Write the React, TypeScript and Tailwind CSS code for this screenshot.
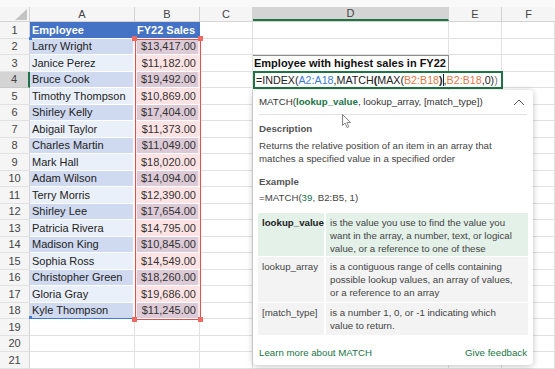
import React from 'react';

const people: [string, string][] = [
  ['Larry Wright', '$13,417.00'],
  ['Janice Perez', '$11,182.00'],
  ['Bruce Cook', '$19,492.00'],
  ['Timothy Thompson', '$10,869.00'],
  ['Shirley Kelly', '$17,404.00'],
  ['Abigail Taylor', '$11,373.00'],
  ['Charles Martin', '$11,049.00'],
  ['Mark Hall', '$18,020.00'],
  ['Adam Wilson', '$14,094.00'],
  ['Terry Morris', '$12,390.00'],
  ['Shirley Lee', '$17,654.00'],
  ['Patricia Rivera', '$14,795.00'],
  ['Madison King', '$10,845.00'],
  ['Sophia Ross', '$14,549.00'],
  ['Christopher Green', '$18,260.00'],
  ['Gloria Gray', '$19,686.00'],
  ['Kyle Thompson', '$11,245.00'],
];

const cols = [
  { key: 'A', w: 'w-[105px]' },
  { key: 'B', w: 'w-[65px]' },
  { key: 'C', w: 'w-[53px]' },
  { key: 'D', w: 'w-[196px]' },
  { key: 'E', w: 'w-[53px]' },
];

const Grid = 'border-r border-b border-[#e1e1e1]';

function Row({ n }: { n: number }) {
  const person = n >= 2 && n <= 18 ? people[n - 2] : null;
  const even = n % 2 === 0;
  const active = n === 4;
  return (
    <div className="flex h-[16.5px]">
      <div
        className={`w-[30px] shrink-0 flex items-center justify-center text-[11px] text-[#444] border-b ${
          active ? 'bg-[#d4d4d4] border-r-2 border-r-[#217346] border-b-[#c8c8c8]' : 'bg-[#f5f5f5] border-r border-r-[#d4d4d4] border-b-[#e1e1e1]'
        }`}
      >
        {n}
      </div>
      {/* column A */}
      {n === 1 ? (
        <div className="w-[105px] shrink-0 bg-[#4472c4] text-white font-bold text-[11px] flex items-center pl-[2px] border-b border-white">
          Employee
        </div>
      ) : person ? (
        <div
          className={`w-[105px] shrink-0 text-[11px] text-[#222] flex items-center pl-[2px] border-b border-r-2 border-white ${
            even ? 'bg-[#cfd9f0]' : 'bg-[#eaf0fa]'
          }`}
        >
          {person[0]}
        </div>
      ) : (
        <div className={`w-[105px] shrink-0 ${Grid}`} />
      )}
      {/* column B */}
      {n === 1 ? (
        <div className="w-[65px] shrink-0 bg-[#4472c4] text-white font-bold text-[11px] flex items-center pl-[2px] border-b border-white">
          FY22 Sales
        </div>
      ) : person ? (
        <div className="w-[65px] shrink-0 px-[2px] border-b border-white bg-[#fde6e6]">
          <div
            className={`h-full flex items-center justify-end pr-[2px] text-[11px] text-[#333] ${
              even ? 'bg-[#ddcad7]' : 'bg-[#fde3e3]'
            }`}
          >
            {person[1]}
          </div>
        </div>
      ) : (
        <div className={`w-[65px] shrink-0 ${Grid}`} />
      )}
      <div className={`w-[53px] shrink-0 ${Grid}`} />
      {n === 3 ? (
        <div className="w-[196px] shrink-0 border-t border-r border-[#8c8c8c] border-b border-b-[#e1e1e1] flex items-center pl-[1px] text-[11px] font-bold text-[#111] whitespace-nowrap">
          Employee with highest sales in FY22
        </div>
      ) : (
        <div className={`w-[196px] shrink-0 ${Grid}`} />
      )}
      <div className={`w-[53px] shrink-0 ${Grid}`} />
      <div className={`flex-1 ${Grid}`} />
    </div>
  );
}

function Formula() {
  const blue = 'text-[#3f7bd6]';
  const orange = 'text-[#e07a4c]';
  return (
    <div className="absolute left-[253px] top-[71px] w-[250px] h-[18px] bg-white border-2 border-[#217346] flex items-center pl-[1px] text-[10.7px] text-[#222] whitespace-nowrap">
      <span>=INDEX(</span>
      <span className={blue}>A2:A18</span>
      <span>,MATCH</span>
      <span className="font-bold">(</span>
      <span>MAX(</span>
      <span className={orange}>B2:B18</span>
      <span className="font-bold">)</span>
      <span className="inline-block w-px h-[12px] bg-[#222]" />
      <span>,</span>
      <span className={orange}>B2:B18</span>
      <span>,0)</span>
      <span className="text-[#777]">)</span>
    </div>
  );
}

function ArgRow({ name, lines, bold, bg, h }: { name: string; lines: string[]; bold?: boolean; bg: string; h: string }) {
  return (
    <div className={`flex gap-[2px] ${h}`}>
      <div className={`w-[66px] shrink-0 ${bg} pl-[4px] pt-[3px] leading-[13px] whitespace-nowrap ${bold ? 'font-bold text-[#222]' : 'text-[#444]'}`}>{name}</div>
      <div className={`flex-1 ${bg} pl-[4px] pt-[3px] leading-[13px] text-[#444] whitespace-nowrap`}>
        {lines.map(l => (
          <div key={l}>{l}</div>
        ))}
      </div>
    </div>
  );
}

function Tooltip() {
  return (
    <div className="absolute left-[253px] top-[90px] w-[280px] h-[275px] bg-white rounded-[4px] shadow-[0_1px_6px_rgba(0,0,0,0.25)] text-[9.7px] text-[#444]">
      <div className="h-[24px] flex items-center justify-between px-[6px]">
        <div className="text-[#333]">
          MATCH(<span className="font-bold text-[#217346]">lookup_value</span>, lookup_array, [match_type])
        </div>
        <svg width="12" height="8" viewBox="0 0 12 8" className="mr-[2px]">
          <polyline points="1,7 6,2 11,7" fill="none" stroke="#555" strokeWidth="1" />
        </svg>
      </div>
      <div className="mx-[6px] border-b border-[#e1e1e1]" />
      <div className="px-[6px] pt-[7px] leading-[13px]">
        <div className="font-bold text-[#555]">Description</div>
        <div className="mt-[4px]">
          <div>Returns the relative position of an item in an array that</div>
          <div>matches a specified value in a specified order</div>
        </div>
        <div className="mt-[10px] font-bold text-[#555]">Example</div>
        <div className="mt-[3px]">
          =MATCH(<span className="text-[#217346]">39</span>, B2:B5, 1)
        </div>
      </div>
      <div className="mx-[5px] mt-[9px] flex flex-col gap-[1px]">
        <ArgRow
          name="lookup_value"
          bold
          bg="bg-[#e3f1e9]"
          h="h-[43px]"
          lines={['is the value you use to find the value you', 'want in the array, a number, text, or logical', 'value, or a reference to one of these']}
        />
        <ArgRow
          name="lookup_array"
          bg="bg-[#f3f3f3]"
          h="h-[45px]"
          lines={['is a contiguous range of cells containing', 'possible lookup values, an array of values,', 'or a reference to an array']}
        />
        <ArgRow
          name="[match_type]"
          bg="bg-[#f3f3f3]"
          h="h-[32px]"
          lines={['is a number 1, 0, or -1 indicating which', 'value to return.']}
        />
      </div>
      <div className="mt-[11px] px-[6px] flex justify-between leading-[13px] text-[#217346]">
        <span>Learn more about MATCH</span>
        <span>Give feedback</span>
      </div>
    </div>
  );
}

export default function App() {
  const rows = Array.from({ length: 21 }, (_, i) => i + 1);
  return (
    <div className="relative w-[555px] h-[369px] overflow-hidden bg-white font-['Liberation_Sans',Arial,sans-serif]">
      <div className="h-[7px] bg-[#f9f9f9]" />
      <div className="flex h-[15px] bg-[#f5f5f5] border-b border-[#d4d4d4]">
        <div className="w-[30px] shrink-0 relative border-r border-[#d4d4d4]">
          <svg width="12" height="11" viewBox="0 0 12 11" className="absolute right-[2px] bottom-[1px]">
            <polygon points="12,0 12,11 0,11" fill="#c4c4c4" />
          </svg>
        </div>
        {cols.map(c => (
          <div
            key={c.key}
            className={`${c.w} shrink-0 flex items-center justify-center text-[11px] text-[#444] border-r border-[#d4d4d4] ${
              c.key === 'D' ? 'bg-[#d4d4d4] border-b-2 border-b-[#217346]' : ''
            }`}
          >
            {c.key}
          </div>
        ))}
        <div className="flex-1 flex items-center justify-center text-[11px] text-[#444]">F</div>
      </div>
      <div className="relative">
        {rows.map(n => (
          <Row key={n} n={n} />
        ))}
        {/* A2:A18 reference outline */}
        <div className="absolute left-[30px] top-[15.5px] w-[104px] h-[281px] border-b border-[#3f7bd6]" />
        <div className="absolute left-[29px] top-[15px] w-[3px] h-[3px] bg-[#3f7bd6]" />
        <div className="absolute left-[29px] top-[294px] w-[3px] h-[3px] bg-[#3f7bd6]" />
        {/* B2:B18 reference outline */}
        <div className="absolute left-[135px] top-[16.5px] w-[66px] h-[281px] border border-[#e4504d]" />
        <div className="absolute left-[132px] top-[14px] w-[5px] h-[5px] bg-[#ee6a63]" />
        <div className="absolute left-[198px] top-[14px] w-[5px] h-[5px] bg-[#ee6a63]" />
        <div className="absolute left-[132px] top-[295px] w-[5px] h-[5px] bg-[#ee6a63]" />
        <div className="absolute left-[198px] top-[295px] w-[5px] h-[5px] bg-[#ee6a63]" />
      </div>
      <Formula />
      <Tooltip />
      <svg width="10" height="15" viewBox="0 0 10 15" className="absolute left-[342px] top-[114px]">
        <path d="M0.5 0.5 L0.5 11.5 L3 9 L5 13.5 L6.8 12.7 L4.9 8.4 L8.5 8.4 Z" fill="white" stroke="#666" strokeWidth="0.8" />
      </svg>
    </div>
  );
}
